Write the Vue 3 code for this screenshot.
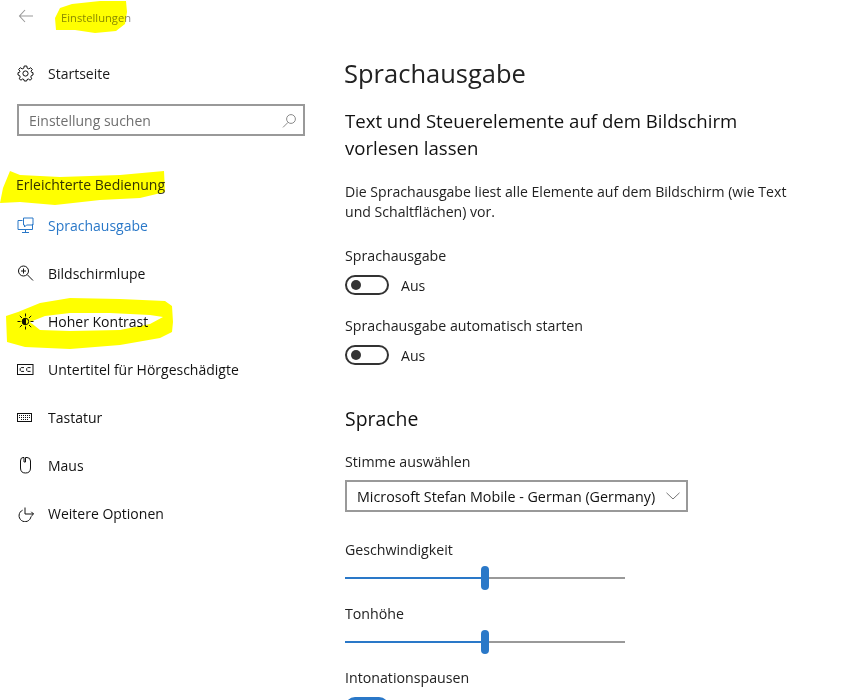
<script setup>
const items = [
  { label: 'Sprachausgabe', icon: 'narrator', active: true },
  { label: 'Bildschirmlupe', icon: 'zoom' },
  { label: 'Hoher Kontrast', icon: 'sun' },
  { label: 'Untertitel für Hörgeschädigte', icon: 'cc' },
  { label: 'Tastatur', icon: 'kbd' },
  { label: 'Maus', icon: 'mouse' },
  { label: 'Weitere Optionen', icon: 'more' }
]
</script>

<template>
  <div class="page">
    <svg class="marker" width="850" height="700" viewBox="0 0 850 700">
      <path fill="#ffff00" d="M60 8 L72 4 L100 1 L126 1 L127 12 L125 24 L116 31 L95 33 L75 30 L56 30 L55 18 Z" />
      <path fill="#ffff00" d="M10 171 L20 175 L60 177 L120 175 L164 171 L165 192 L140 198 L100 200 L55 205 L20 202 L0 203 L3 188 Z" />
      <path fill="#ffff00" fill-rule="evenodd" d="M18 312 L40 303 L70 298 L120 299 L165 301 L172 306 L173 322 L172 332 L160 338 L120 345 L70 349 L25 347 L7 342 L6 316 Z M30 322 L45 316 L70 313 L110 313 L150 315 L163 317 L150 324 L120 330 L70 331 L40 330 Z" />
    </svg>

    <aside class="side">
      <div class="top">
        <svg class="back" width="16" height="14" viewBox="0 0 16 14"><path d="M7 1 L1.5 7 L7 13 M1.5 7 H15" fill="none" stroke="#9a9a9a" stroke-width="1.1" /></svg>
        <span class="app">Einstellungen</span>
      </div>
      <div class="row home">
        <svg class="ico" width="17" height="17" viewBox="0 0 17 17" fill="none" stroke="#111" stroke-width="1">
          <circle cx="8.5" cy="8.5" r="2.6" />
          <path d="M7.2 1 H9.8 L10.2 3.2 L11.8 3.9 L13.7 2.7 L15.3 4.5 L14 6.2 L14.6 7.4 L16 7.7 V10 L14.4 10.5 L13.8 12 L14.8 13.8 L13 15.2 L11.4 14 L10 14.6 L9.7 16 H7.3 L7 14.6 L5.6 14 L4 15.2 L2.2 13.8 L3.2 12 L2.6 10.5 L1 10 V7.7 L2.4 7.4 L3 6.2 L1.7 4.5 L3.3 2.7 L5.2 3.9 L6.8 3.2 Z" />
        </svg>
        <span>Startseite</span>
      </div>
      <div class="search">
        <span>Einstellung suchen</span>
        <svg width="15" height="15" viewBox="0 0 15 15" fill="none" stroke="#8a8a8a" stroke-width="1"><circle cx="9" cy="6" r="4.4" /><path d="M6 9.4 L1 14.4" /></svg>
      </div>
      <div class="group">Erleichterte Bedienung</div>
      <nav>
        <div v-for="it in items" :key="it.label" class="row item" :class="{ active: it.active }">
          <svg class="ico" width="17" height="17" viewBox="0 0 17 17" fill="none" stroke="currentColor" stroke-width="1">
            <template v-if="it.icon === 'narrator'">
              <path d="M5.5 3.5 H1 V12.5 H15.5 V7" />
              <path d="M6.5 1 H16 V8 H9.5 L7.5 10 V8 H6.5 Z" />
              <path d="M8.5 12.5 V15.5 M5 15.5 H12" />
            </template>
            <template v-else-if="it.icon === 'zoom'">
              <circle cx="6.5" cy="6" r="5" />
              <path d="M4 6 H9 M6.5 3.5 V8.5 M10.2 9.6 L16 15.5" />
            </template>
            <template v-else-if="it.icon === 'sun'">
              <circle cx="8.5" cy="8.5" r="3.2" />
              <path d="M8.5 5.3 A3.2 3.2 0 0 0 8.5 11.7 Z" fill="currentColor" />
              <path d="M8.5 0.5 V3.5 M8.5 13.5 V16.5 M0.5 8.5 H3.5 M13.5 8.5 H16.5 M2.8 2.8 L5 5 M12 12 L14.2 14.2 M14.2 2.8 L12 5 M5 12 L2.8 14.2" />
            </template>
            <template v-else-if="it.icon === 'cc'">
              <rect x="0.5" y="3.5" width="15.5" height="10" />
              <path d="M7 6.6 H4.2 L3.2 7.6 V9.4 L4.2 10.4 H7 M13.5 6.6 H10.7 L9.7 7.6 V9.4 L10.7 10.4 H13.5" />
            </template>
            <template v-else-if="it.icon === 'kbd'">
              <rect x="0.5" y="4.5" width="14" height="8" />
              <path d="M2 6.5 H13 M2 8.5 H13 M4 10.5 H11" stroke-dasharray="1 1" />
            </template>
            <template v-else-if="it.icon === 'mouse'">
              <path d="M6 0.5 H7 V5 H8.5 V0.5 H10 Q13.5 0.5 13.5 4 V11 Q13.5 16 8.5 16 Q3.5 16 3.5 11 V4 Q3.5 0.5 6 0.5 Z" />
            </template>
            <template v-else>
              <path d="M5.6 5.2 A6 6 0 1 0 14 11.5" />
              <path d="M8 2.5 V9 H16.5 M14.3 6.8 L16.5 9 L14.3 11.2" />
            </template>
          </svg>
          <span>{{ it.label }}</span>
        </div>
      </nav>
    </aside>

    <main class="main">
      <h1>Sprachausgabe</h1>
      <h2 class="lead">Text und Steuerelemente auf dem Bildschirm vorlesen lassen</h2>
      <p class="desc">Die Sprachausgabe liest alle Elemente auf dem Bildschirm (wie Text und Schaltflächen) vor.</p>

      <div class="label first">Sprachausgabe</div>
      <div class="toggle-row"><span class="toggle"><i></i></span><span>Aus</span></div>

      <div class="label second">Sprachausgabe automatisch starten</div>
      <div class="toggle-row"><span class="toggle"><i></i></span><span>Aus</span></div>

      <h2 class="section">Sprache</h2>
      <div class="label voice">Stimme auswählen</div>
      <div class="select">
        <span>Microsoft Stefan Mobile - German (Germany)</span>
        <svg width="14" height="8" viewBox="0 0 14 8"><path d="M0.5 0.8 L7 7 L13.5 0.8" fill="none" stroke="#777" stroke-width="1" /></svg>
      </div>

      <div class="label speed">Geschwindigkeit</div>
      <div class="slider"><span class="fill"></span><span class="rest"></span><span class="thumb"></span></div>
      <div class="label pitch">Tonhöhe</div>
      <div class="slider"><span class="fill"></span><span class="rest"></span><span class="thumb"></span></div>
      <div class="label pause">Intonationspausen</div>
      <div class="on"></div>
    </main>
  </div>
</template>

<style>
html, body { margin: 0; background: #fff; }
</style>

<style scoped>
.page {
  position: relative;
  display: flex;
  width: 850px;
  height: 700px;
  overflow: hidden;
  background: #fff;
  color: #1a1a1a;
  font-family: "Open Sans", "Noto Sans", "Liberation Sans", sans-serif;
  font-size: 14px;
}
.marker { position: absolute; left: 0; top: 0; mix-blend-mode: multiply; pointer-events: none; z-index: 2; }
.side { width: 345px; flex: none; }
.top { display: flex; align-items: center; height: 34px; padding-left: 18px; }
.back { margin-top: -2px; }
.app { margin-left: 27px; font-size: 11.2px; color: #8a8a8a; }
.row { display: flex; align-items: center; height: 48px; padding-left: 17px; }
.row span { margin-left: 14px; }
.home { margin-top: 15px; }
.search {
  display: flex;
  align-items: center;
  justify-content: space-between;
  box-sizing: border-box;
  width: 288px;
  height: 32px;
  margin: 7px 0 0 17px;
  padding: 0 6px 0 10px;
  border: 2px solid #999;
  color: #6f6f6f;
}
.group { margin: 39px 0 0 16px; height: 20px; line-height: 20px; color: #333; }
nav { margin-top: 6px; }
.item { color: #111; }
.item.active { color: #2a78c8; }
.main { flex: 1; font-size: 14.1px; }
h1 { margin: 55px 0 0 -1px; font-size: 25.5px; line-height: 36px; font-weight: 400; color: #222; }
h2 { margin: 0; font-weight: 400; }
.lead { width: 420px; margin-top: 16px; font-size: 18.6px; line-height: 27px; color: #111; }
.desc { width: 460px; margin: 21px 0 0; line-height: 20px; color: #222; }
.label { height: 20px; line-height: 20px; color: #222; font-size: 14.2px; }
.first { margin-top: 24px; }
.second { margin-top: 21px; }
.toggle-row { display: flex; align-items: center; gap: 12px; height: 20px; margin-top: 9px; }
.toggle { display: flex; align-items: center; box-sizing: border-box; width: 44px; height: 20px; padding-left: 4px; border: 2px solid #333; border-radius: 10px; }
.toggle i { width: 10px; height: 10px; border-radius: 50%; background: #333; }
.section { margin-top: 40px; font-size: 19.4px; line-height: 28px; color: #111; }
.voice { margin-top: 19px; }
.select {
  display: flex;
  align-items: center;
  justify-content: space-between;
  box-sizing: border-box;
  width: 343px;
  height: 32px;
  margin-top: 8px;
  padding: 0 6px 0 10px;
  border: 2px solid #999;
  color: #111;
  font-size: 14.3px;
}
.speed { margin-top: 28px; }
.pitch { margin-top: 14px; }
.pause { margin-top: 14px; }
.slider { position: relative; display: flex; align-items: center; width: 280px; height: 24px; margin-top: 6px; }
.fill { width: 140px; height: 2px; background: #2a78c8; }
.rest { flex: 1; height: 2px; background: #999; }
.thumb { position: absolute; left: 136px; top: 0; width: 8px; height: 24px; border-radius: 4px; background: #2a78c8; }
.on { width: 44px; height: 20px; margin-top: 9px; border-radius: 10px; background: #2a78c8; }
</style>
